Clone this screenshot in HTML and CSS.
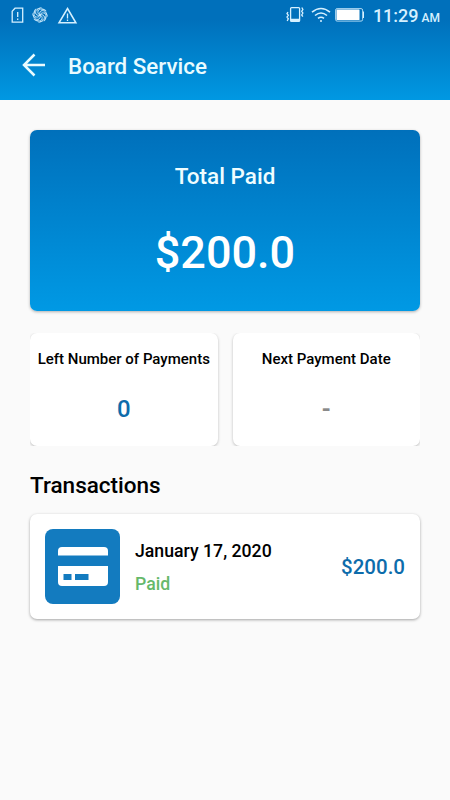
FILE: index.html
```
<!DOCTYPE html>
<html lang="en">
<head>
  <meta charset="UTF-8">
  <meta name="viewport" content="width=device-width, initial-scale=1.0">
  <title>Board Service</title>
  <link rel="stylesheet" href="styles.css">
</head>
<body>
  <header class="header">
    <div class="status">
      <svg class="status-left" width="70" height="20" viewBox="0 0 70 20" fill="none" stroke="#d5f0ff" stroke-width="1.3">
        <!-- sim card -->
        <path d="M5 1.200h7.700v14H2.200V4.200z"/>
        <path d="M7.700 5v5M7.700 11.500v1.400"/>
        <!-- swirl -->
        <g stroke-width=".9">
          <path id="arm" d="M30 8c-2.500-1-3-4-.5-5.500 1.500-1 3.500-.8 5 .5M27.500 3.500c.5-1.500 2-2.800 4-2.800"/>
          <use href="#arm" transform="rotate(45 30 8)"/>
          <use href="#arm" transform="rotate(90 30 8)"/>
          <use href="#arm" transform="rotate(135 30 8)"/>
          <use href="#arm" transform="rotate(180 30 8)"/>
          <use href="#arm" transform="rotate(225 30 8)"/>
          <use href="#arm" transform="rotate(270 30 8)"/>
          <use href="#arm" transform="rotate(315 30 8)"/>
        </g>
        <!-- warning -->
        <path d="M57.500 1.500l8.400 14.300H49z" stroke-width="1.5"/>
        <path d="M57.500 6.500v5M57.500 12.500v1.500"/>
      </svg>
      <div class="status-right">
        <svg width="80" height="18" viewBox="0 0 80 18" fill="none" stroke="#d5f0ff" stroke-width="1.3">
          <!-- vibrate -->
          <rect x="4.6" y="1.6" width="9" height="13.8" rx="1"/>
          <path d="M4.600 14h9" stroke-width="2.500"/>
          <path d="M2 6l-1 1.500 1.300 1.800L1 11l1.300 1.800L1.200 15M15.800 1.500l1.100 2-1.200 1.800 1.200 1.800-1.200 1.800 1.100 1.800"/>
          <!-- wifi -->
          <path d="M26 6.200q9-7.400 18 0M29 9.500q6-5 12 0M32 12.400q3-2.400 6 0" stroke-width="1.600"/>
          <circle cx="35" cy="15" r="1" fill="#d5f0ff" stroke="none"/>
          <!-- battery -->
          <rect x="49.600" y="2.600" width="27" height="12.500" rx="1.500" stroke-width=".8"/>
          <path d="M77.500 5.500v6.500" stroke-width="1"/>
          <rect x="50.500" y="3.500" width="23" height="10.500" rx=".5" fill="#fff" stroke="none"/>
        </svg>
        <span class="clock">11:29</span>
        <span class="ampm">AM</span>
      </div>
    </div>
    <div class="toolbar">
      <svg class="back" width="24" height="24" viewBox="0 0 24 24" fill="none" stroke="#e9fbff" stroke-width="2.500">
        <path d="M23 12H2.500M12.500 1.500L2 12l10.500 10.500"/>
      </svg>
      <h1 class="title">Board Service</h1>
    </div>
  </header>

  <main class="content">
    <section class="total">
      <div class="total-label">Total Paid</div>
      <div class="total-amount">$200.0</div>
    </section>

    <section class="summary">
      <div class="card">
        <div class="card-label">Left Number of Payments</div>
        <div class="card-value">0</div>
      </div>
      <div class="card">
        <div class="card-label">Next Payment Date</div>
        <div class="card-value empty">-</div>
      </div>
    </section>

    <h2 class="heading">Transactions</h2>
    <div class="transaction">
      <svg class="card-icon" width="75" height="75" viewBox="0 0 75 75">
        <rect width="75" height="75" rx="8" fill="#137bbf"/>
        <path d="M13 26.500V22a4 4 0 0 1 4-4h42a4 4 0 0 1 4 4v4.500z" fill="#fff"/>
        <path d="M13 37h50v16a4 4 0 0 1-4 4H17a4 4 0 0 1-4-4z" fill="#fff"/>
        <path d="M18.500 45h8v6h-8zM30 45h13.500v6H30z" fill="#137bbf"/>
      </svg>
      <div class="info">
        <div class="date">January 17, 2020</div>
        <div class="state">Paid</div>
      </div>
      <div class="amount">$200.0</div>
    </div>
  </main>
</body>
</html>
```

FILE: styles.css
```
body {
  margin: 0;
  background-color: #fafafa;
  font-family: Roboto, "Liberation Sans", sans-serif;
  font-weight: 500;
  color: #000;
}
.header {
  height: 100px;
  background: linear-gradient(#0070bb 20%, #0098e2);
}
.status {
  display: flex;
  justify-content: space-between;
  height: 30px;
  padding: 0 10px;
}
.status-left {
  margin-top: 7px;
}
.status-right {
  display: flex;
  align-items: baseline;
  color: #d5f0ff;
}
.status-right svg {
  align-self: center;
  margin-right: 7px;
}
.clock {
  font-size: 18px;
  line-height: 32px;
}
.ampm {
  margin-left: 3px;
  font-size: 12px;
  line-height: 14px;
}
.toolbar {
  display: flex;
  align-items: center;
  height: 70px;
  padding-left: 22px;
  gap: 22px;
}
.title {
  margin: 2px 0 0;
  font-size: 22.4px;
  font-weight: 500;
  color: #e9fbff;
}
.content {
  padding: 30px;
}
.total {
  height: 181px;
  border-radius: 7px;
  background: linear-gradient(#0070bb, #0099e4);
  box-shadow: 0 1px 3px rgba(0, 0, 0, 0.3);
  text-align: center;
  color: #effdff;
}
.total-label {
  padding-top: 32px;
  font-size: 22.5px;
  line-height: 28px;
}
.total-amount {
  margin-top: 35px;
  font-size: 45px;
  line-height: 56px;
  color: #fff;
}
/* the row cuts off the shadow under the cards */
.summary {
  display: grid;
  grid-template-columns: 1fr 1fr;
  gap: 15px;
  margin-top: 22px;
  overflow: hidden;
}
.card {
  height: 113px;
  border-radius: 7px;
  background-color: #fff;
  box-shadow: 0 1px 3px rgba(0, 0, 0, 0.25);
  text-align: center;
}
.card-label {
  padding-top: 16px;
  font-size: 15px;
  line-height: 21px;
  white-space: nowrap;
}
.card-value {
  margin-top: 24px;
  font-size: 24px;
  line-height: 30px;
  color: #0d6cab;
}
.empty {
  font-weight: 700;
  color: #8a8a8a;
}
.heading {
  margin: 24px 0 14px;
  font-size: 22.5px;
  font-weight: 500;
  line-height: 30px;
}
.transaction {
  display: flex;
  align-items: center;
  height: 105px;
  box-sizing: border-box;
  padding: 0 15px;
  border-radius: 7px;
  background-color: #fff;
  box-shadow: 0 1px 3px rgba(0, 0, 0, 0.35);
}
.info {
  flex: 1;
  margin: 2px 0 0 15px;
  font-size: 17.7px;
  line-height: 24px;
}
.state {
  margin-top: 9px;
  color: #66b96a;
}
.amount {
  margin-top: 1px;
  font-size: 20.5px;
  color: #0d6cab;
}
```
